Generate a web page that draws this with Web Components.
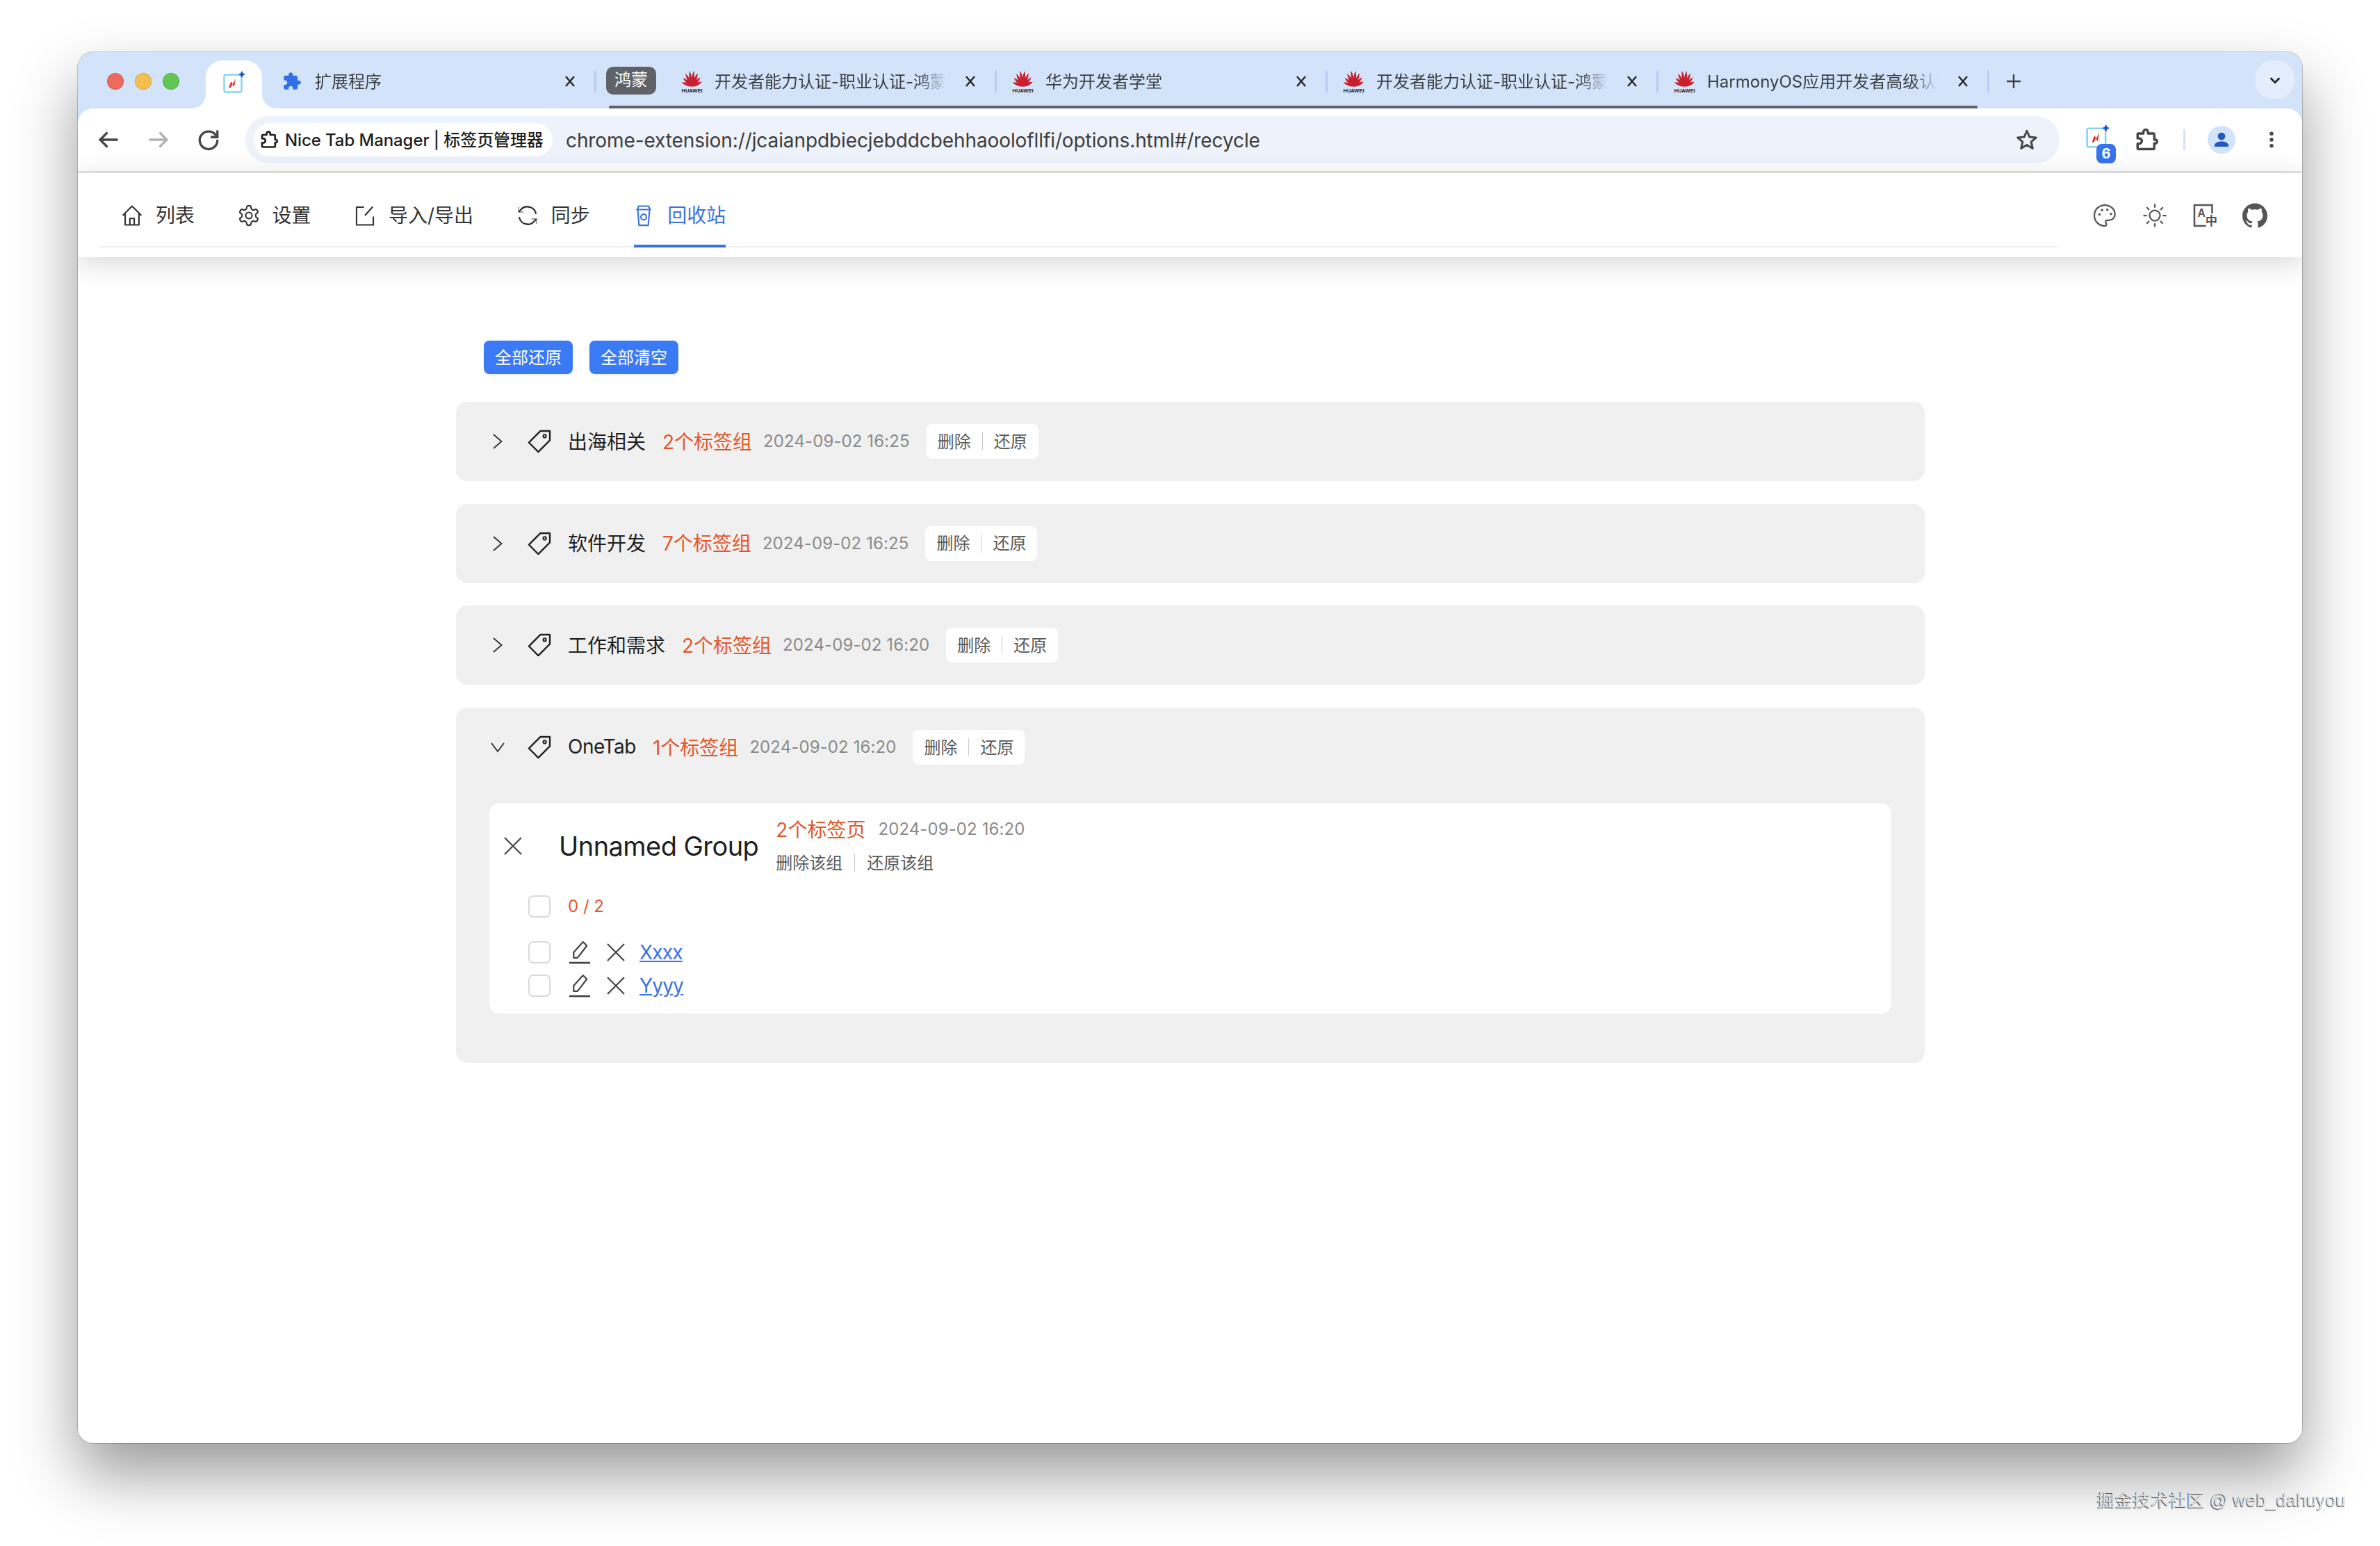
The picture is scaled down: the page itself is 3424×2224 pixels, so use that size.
<!DOCTYPE html>
<html lang="zh">
<head>
<meta charset="utf-8">
<title>Nice Tab Manager</title>
<style>
  html, body { margin: 0; background: #fff; }
  body { width: 3424px; height: 2224px; overflow: hidden; font-family: Inter, "Noto Sans CJK SC", sans-serif; }
</style>
</head>
<body>
<page-shell>
  <browser-window>
    <tab-strip slot="strip">
      <plain-tab first icon="puzzle">扩展程序</plain-tab>
      <tab-group label="鸿蒙">
        <plain-tab icon="huawei">开发者能力认证-职业认证-鸿蒙生态</plain-tab>
        <plain-tab icon="huawei">华为开发者学堂</plain-tab>
        <plain-tab icon="huawei">开发者能力认证-职业认证-鸿蒙生态</plain-tab>
        <plain-tab icon="huawei">HarmonyOS应用开发者高级认证</plain-tab>
      </tab-group>
    </tab-strip>
    <tool-bar slot="toolbar"></tool-bar>
    <nav-bar slot="nav"></nav-bar>
    <recycle-page>
      <recycle-card name="出海相关" count="2个标签组" date="2024-09-02 16:25"></recycle-card>
      <recycle-card name="软件开发" count="7个标签组" date="2024-09-02 16:25"></recycle-card>
      <recycle-card name="工作和需求" count="2个标签组" date="2024-09-02 16:20"></recycle-card>
      <recycle-card open name="OneTab" count="1个标签组" date="2024-09-02 16:20">
        <group-panel name="Unnamed Group" count="2个标签页" date="2024-09-02 16:20">
          <tab-link>Xxxx</tab-link>
          <tab-link>Yyyy</tab-link>
        </group-panel>
      </recycle-card>
    </recycle-page>
  </browser-window>
</page-shell>

<script>
const CJK = 'Inter, "Noto Sans CJK SC", sans-serif';

const ICONS = {
  back: '<path d="M21 12H4M11 5l-7 7 7 7" fill="none" stroke="currentColor" stroke-width="2.2"/>',
  forward: '<path d="M3 12h17M13 5l7 7-7 7" fill="none" stroke="currentColor" stroke-width="2.2"/>',
  reload: '<path d="M19.5 8.5A8.5 8.5 0 1 0 20.5 12" fill="none" stroke="currentColor" stroke-width="2.2"/><path d="M20.5 3v6.5H14" fill="none" stroke="currentColor" stroke-width="2.2"/>',
  puzzle: '<path fill="currentColor" d="M20.5 11H19V7c0-1.1-.9-2-2-2h-4V3.5C13 2.12 11.88 1 10.5 1S8 2.12 8 3.5V5H4c-1.1 0-1.99.9-1.99 2v3.8H3.5c1.49 0 2.7 1.21 2.7 2.7s-1.21 2.7-2.7 2.7H2V20c0 1.1.9 2 2 2h3.8v-1.5c0-1.49 1.21-2.7 2.7-2.7 1.49 0 2.7 1.21 2.7 2.7V22H17c1.1 0 2-.9 2-2v-4h1.5c1.38 0 2.5-1.12 2.5-2.5S21.88 11 20.5 11z"/>',
  puzzleLine: '<path fill="none" stroke="currentColor" stroke-width="2.3" stroke-linejoin="round" d="M19.5 12V7c0-.6-.4-1-1-1h-5V4.5a2.2 2.2 0 0 0-4.4 0V6H4.5c-.6 0-1 .4-1 1v3.6H5a2.6 2.6 0 0 1 0 5.2H3.5V20c0 .6.4 1 1 1h14c.6 0 1-.4 1-1v-4.500h1.300a1.800 1.800 0 0 0 0-3.500z"/>',
  star: '<path fill="none" stroke="currentColor" stroke-width="2.1" stroke-linejoin="round" d="M12 3l2.700 6.200 6.700.6-5.100 4.400 1.600 6.600L12 17.300 6.100 20.800l1.600-6.600-5.100-4.400 6.700-.6z"/>',
  person: '<circle cx="12" cy="8" r="4.300" fill="currentColor"/><path fill="currentColor" d="M4 20v-1.500c0-3 4-4.500 8-4.500s8 1.500 8 4.500V20z"/>',
  dots: '<circle cx="12" cy="5" r="2.200" fill="currentColor"/><circle cx="12" cy="12" r="2.200" fill="currentColor"/><circle cx="12" cy="19" r="2.200" fill="currentColor"/>',
  down: '<path d="M5 9l7 7 7-7" fill="none" stroke="currentColor" stroke-width="3"/>',
  plus: '<path d="M12 2v20M2 12h20" stroke="currentColor" stroke-width="2.400"/>',
  close: '<path d="M3 3l18 18M21 3L3 21" stroke="currentColor" stroke-width="1.600" fill="none"/>',
  tabClose: '<path d="M6 5l12 14M18 5L6 19" stroke="currentColor" stroke-width="2.600" fill="none"/>',
  home: '<path d="M2.500 12L12 2.500l9.500 9.500M5 10v11.500h14V10M9.800 21.500V15h4.400v6.500" fill="none" stroke="currentColor" stroke-width="1.500" stroke-linejoin="round"/>',
  gear: '<path fill="none" stroke="currentColor" stroke-width="1.500" d="M12.220 2h-.44a2 2 0 0 0-2 2v.18a2 2 0 0 1-1 1.730l-.43.25a2 2 0 0 1-2 0l-.15-.08a2 2 0 0 0-2.730.73l-.22.38a2 2 0 0 0 .73 2.730l.15.1a2 2 0 0 1 1 1.720v.51a2 2 0 0 1-1 1.740l-.15.09a2 2 0 0 0-.73 2.730l.22.38a2 2 0 0 0 2.730.73l.15-.08a2 2 0 0 1 2 0l.43.25a2 2 0 0 1 1 1.730V20a2 2 0 0 0 2 2h.44a2 2 0 0 0 2-2v-.18a2 2 0 0 1 1-1.730l.43-.25a2 2 0 0 1 2 0l.15.08a2 2 0 0 0 2.730-.73l.22-.39a2 2 0 0 0-.73-2.730l-.15-.08a2 2 0 0 1-1-1.740v-.5a2 2 0 0 1 1-1.740l.15-.09a2 2 0 0 0 .73-2.730l-.22-.38a2 2 0 0 0-2.730-.73l-.15.08a2 2 0 0 1-2 0l-.43-.25a2 2 0 0 1-1-1.730V4a2 2 0 0 0-2-2z"/><circle cx="12" cy="12" r="3.200" fill="none" stroke="currentColor" stroke-width="1.500"/>',
  share: '<path d="M11 3.500H3.500v18h17V13M12 12l8-9" fill="none" stroke="currentColor" stroke-width="1.500"/>',
  sync: '<path d="M20.500 10.500A8.800 8.800 0 0 0 5 6.300L3 8.500M3.500 13.500A8.800 8.800 0 0 0 19 17.700l2-2.200" fill="none" stroke="currentColor" stroke-width="1.600"/><path d="M3 3.500v5h5M21 20.500v-5h-5" fill="none" stroke="currentColor" stroke-width="1.200" opacity=".5"/>',
  bin: '<path d="M7 2.500h10l1.500 3.500h-13zM4.500 6h15M6 6l1.300 16h9.400L18 6" fill="none" stroke="currentColor" stroke-width="1.500" stroke-linejoin="round"/><circle cx="12" cy="13.500" r="2.800" fill="none" stroke="currentColor" stroke-width="1.500"/>',
  tag: '<path d="M13 2.500h8.500V11L11 21.500 2.500 13z" fill="none" stroke="currentColor" stroke-width="1.500" stroke-linejoin="round"/><circle cx="16.800" cy="7.200" r="1.300" fill="none" stroke="currentColor" stroke-width="1.300"/>',
  right: '<path d="M6 2l11.500 10L6 22" fill="none" stroke="currentColor" stroke-width="1.900"/>',
  open: '<path d="M3 6l9 12 9-12" fill="none" stroke="currentColor" stroke-width="1.900"/>',
  pen: '<path d="M6.500 17v-5L15 2.500l3.500 3.500L10 17z" fill="none" stroke="currentColor" stroke-width="1.400" stroke-linejoin="round"/><path d="M2.500 21.500h19" stroke="currentColor" stroke-width="1.700"/>',
  palette: '<path d="M12 2C6.500 2 2 6.500 2 12s4.500 10 10 10c.9 0 1.600-.7 1.600-1.600 0-.4-.2-.8-.4-1.100-.3-.3-.4-.7-.4-1.100 0-.9.7-1.600 1.600-1.600H16c3.100 0 5.800-2.500 5.800-5.600C21.800 6 17.500 2 12 2z" fill="none" stroke="currentColor" stroke-width="1.500"/><circle cx="7" cy="11" r="1.200" fill="currentColor"/><circle cx="9.500" cy="6.800" r="1.200" fill="currentColor"/><circle cx="14.500" cy="6.500" r="1.200" fill="currentColor"/><circle cx="18" cy="10.500" r="1.200" fill="currentColor"/>',
  sun: '<circle cx="12" cy="12" r="5" fill="none" stroke="currentColor" stroke-width="1.500"/><path d="M12 1v3.500M12 19.500V23M1 12h3.500M19.500 12H23M4.200 4.200l2.500 2.500M17.300 17.300l2.500 2.500M4.200 19.800l2.500-2.500M17.300 6.700l2.500-2.500" stroke="currentColor" stroke-width="1.500"/>',
  lang: '<path d="M19 10V2H2v20h11" fill="none" stroke="currentColor" stroke-width="1.700"/><text x="5" y="13" font-size="10.500" font-weight="700" font-family="Liberation Sans, sans-serif" fill="currentColor">A</text><text x="12.500" y="21" font-size="11.500" font-weight="700" font-family="Noto Sans CJK SC, sans-serif" fill="currentColor">中</text>',
  github: '<path fill="currentColor" d="M12 .297c-6.630 0-12 5.373-12 12 0 5.303 3.438 9.800 8.205 11.385.6.113.82-.258.82-.577 0-.285-.01-1.040-.015-2.040-3.338.724-4.042-1.610-4.042-1.610C4.422 18.070 3.633 17.700 3.633 17.700c-1.087-.744.084-.729.084-.729 1.205.084 1.838 1.236 1.838 1.236 1.070 1.835 2.809 1.305 3.495.998.108-.776.417-1.305.76-1.605-2.665-.3-5.466-1.332-5.466-5.930 0-1.310.465-2.380 1.235-3.220-.135-.303-.54-1.523.105-3.176 0 0 1.005-.322 3.300 1.230.96-.267 1.980-.399 3-.405 1.020.006 2.040.138 3 .405 2.280-1.552 3.285-1.230 3.285-1.230.645 1.653.24 2.873.12 3.176.765.84 1.230 1.910 1.230 3.220 0 4.610-2.805 5.625-5.475 5.920.42.36.81 1.096.81 2.220 0 1.606-.015 2.896-.015 3.286 0 .315.21.69.825.57C20.565 22.092 24 17.592 24 12.297c0-6.627-5.373-12-12-12"/>',
  nice: '<rect x="1.500" y="5.500" width="25" height="25" rx="2.500" fill="#fff" stroke="#86d2f5" stroke-width="2.400"/><path d="M8 24l3.500-9 2.500 4 4-8-2 12-3-4-2 5z" fill="#d9331f"/><path d="M27 0l1.800 3.200L32 5l-3.200 1.800L27 10l-1.800-3.200L22 5l3.200-1.800z" fill="#2456d6"/>'
};

class UiIcon extends HTMLElement {
  constructor() {
    super();
    this.attachShadow({ mode: 'open' });
    const size = this.getAttribute('size') || 32;
    const name = this.getAttribute('name');
    const box = name === 'nice' ? '0 0 32 32' : '0 0 24 24';
    this.shadowRoot.innerHTML = `
      <style>
        :host { display: inline-flex; width: ${size}px; height: ${size}px; flex: none; align-items: center; justify-content: center; }
        svg { width: 100%; height: 100%; display: block; overflow: visible; }
      </style>
      <svg viewBox="${box}">${ICONS[name] || ''}</svg>`;
  }
}
customElements.define('ui-icon', UiIcon);

class HuaweiLogo extends HTMLElement {
  constructor() {
    super();
    this.attachShadow({ mode: 'open' });
    const petals = [[-66, 16], [-44, 18], [-25, 21], [-8, 23], [8, 23], [25, 21], [44, 18], [66, 16]]
      .map(([a, l]) => `<path transform="translate(15.500 23.500) rotate(${a}) scale(1 ${l / 22})" d="M0 0C-2.800-7-2.600-15 -.6-22 2.200-15 2.800-7 0 0z" fill="#c9202e"/>`)
      .join('');
    this.shadowRoot.innerHTML = `
      <style>
        :host { display: block; width: 31px; height: 32px; flex: none; }
        svg { width: 31px; height: 32px; display: block; }
      </style>
      <svg viewBox="0 0 31 32">${petals}<text x="15.500" y="31.500" text-anchor="middle" font-size="7.500" font-weight="700" font-family="Liberation Sans, sans-serif" fill="#222">HUAWEI</text></svg>`;
  }
}
customElements.define('huawei-logo', HuaweiLogo);

class PageShell extends HTMLElement {
  constructor() {
    super();
    this.attachShadow({ mode: 'open' });
    this.shadowRoot.innerHTML = `
      <style>
        :host { display: block; position: relative; width: 3424px; height: 2224px; box-sizing: border-box; padding: 75px 112px 0; }
        .mark {
          position: absolute; left: 3017px; top: 2137px; white-space: nowrap;
          font: 25.500px "Liberation Sans", "Noto Sans CJK SC", sans-serif; letter-spacing: .3px;
          color: #e2e2e2; text-shadow: -1px 1px 1px #444;
        }
      </style>
      <slot></slot>
      <div class="mark">掘金技术社区 @ web_dahuyou</div>`;
  }
}
customElements.define('page-shell', PageShell);

class BrowserWindow extends HTMLElement {
  constructor() {
    super();
    this.attachShadow({ mode: 'open' });
    this.shadowRoot.innerHTML = `
      <style>
        :host {
          display: flex; flex-direction: column; width: 3200px; height: 2001px;
          border-radius: 22px; overflow: hidden; background: #d3e3fa;
          box-shadow: 0 45px 90px rgba(0,0,0,.4), 0 0 0 1px rgba(0,0,0,.18);
          font-family: ${CJK};
        }
        .page { flex: 1; display: flex; flex-direction: column; background: #fff; }
      </style>
      <slot name="strip"></slot>
      <slot name="toolbar"></slot>
      <div class="page">
        <slot name="nav"></slot>
        <slot></slot>
      </div>`;
  }
}
customElements.define('browser-window', BrowserWindow);

class TabStrip extends HTMLElement {
  constructor() {
    super();
    this.attachShadow({ mode: 'open' });
    this.shadowRoot.innerHTML = `
      <style>
        :host { display: flex; height: 81px; box-sizing: border-box; padding: 12px 12px 0 42px; color: #3c4043; }
        .lights { display: flex; gap: 16px; height: 60px; align-items: center; margin-right: 38px; }
        .lights i { width: 24px; height: 24px; border-radius: 50%; box-sizing: border-box; border: 1px solid rgba(0,0,0,.12); }
        .active {
          position: relative; width: 81px; height: 69px; background: #fff; border-radius: 24px 24px 0 0;
          display: flex; justify-content: center; padding-top: 15px; box-sizing: border-box;
        }
        .active::before, .active::after { content: ""; position: absolute; bottom: 0; width: 20px; height: 20px; }
        .active::before { left: -20px; background: radial-gradient(circle at 0 0, transparent 19.500px, #fff 20px); }
        .active::after { right: -20px; background: radial-gradient(circle at 100% 0, transparent 19.500px, #fff 20px); }
        .plus { display: flex; height: 60px; align-items: center; margin-left: 40px; color: #3c4043; }
        .more {
          margin-left: auto; width: 55px; height: 55px; border-radius: 24px; background: #e4edfb;
          display: flex; align-items: center; justify-content: center; color: #1f1f1f;
        }
      </style>
      <div class="lights">
        <i style="background:#ed6a5e"></i><i style="background:#f5bf4f"></i><i style="background:#62c554"></i>
      </div>
      <div class="active"><ui-icon name="nice" size="32"></ui-icon></div>
      <slot></slot>
      <div class="plus"><ui-icon name="plus" size="24"></ui-icon></div>
      <div class="more"><ui-icon name="down" size="22"></ui-icon></div>`;
  }
}
customElements.define('tab-strip', TabStrip);

class TabGroup extends HTMLElement {
  constructor() {
    super();
    this.attachShadow({ mode: 'open' });
    this.shadowRoot.innerHTML = `
      <style>
        :host {
          display: flex; height: 69px; box-sizing: border-box; margin-left: 18px; margin-right: -17px;
          align-items: flex-start; position: relative;
        }
        :host::after { content: ""; position: absolute; left: 0; right: 17px; bottom: 0; height: 4px; background: #5f6368; border-radius: 2px 2px 0 0; }
        .chip {
          margin: 9px 14px 0 -4px; width: 72px; height: 40px; box-sizing: border-box; padding-bottom: 3px; border-radius: 10px; background: #5f6368; color: #fff;
          font-size: 24px; line-height: 37px; text-align: center; font-family: ${CJK};
        }
      </style>
      <div class="chip">${this.getAttribute('label')}</div>
      <slot></slot>`;
  }
}
customElements.define('tab-group', TabGroup);

class PlainTab extends HTMLElement {
  constructor() {
    super();
    this.attachShadow({ mode: 'open' });
    const first = this.hasAttribute('first');
    const icon = this.getAttribute('icon') === 'huawei'
      ? '<huawei-logo></huawei-logo>'
      : '<ui-icon name="puzzle" size="28" style="color:#3070e4"></ui-icon>';
    this.shadowRoot.innerHTML = `
      <style>
        :host {
          display: flex; align-items: center; height: 60px; box-sizing: border-box; flex: none;
          width: ${first ? 481 : 476}px; padding: 0 0 0 ${first ? 29 : 22}px; font-size: 24px; color: #3c4043;
          font-family: ${CJK};
        }
        .name {
          flex: 1; min-width: 0; margin-left: ${first ? 19 : 17}px; padding-bottom: 4px; white-space: nowrap; overflow: hidden;
          -webkit-mask-image: linear-gradient(to right, #000 calc(100% - 40px), transparent);
                  mask-image: linear-gradient(to right, #000 calc(100% - 40px), transparent);
        }
        .x { margin: 0 26px 0 23px; color: #2b2b2b; }
        .sep { width: 3px; height: 32px; background: #b7cdf5; border-radius: 2px; margin-left: -3px; }
      </style>
      ${icon}
      <div class="name"><slot></slot></div>
      <ui-icon class="x" name="tabClose" size="24"></ui-icon>
      <div class="sep"></div>`;
  }
}
customElements.define('plain-tab', PlainTab);

class ToolBar extends HTMLElement {
  constructor() {
    super();
    this.attachShadow({ mode: 'open' });
    this.shadowRoot.innerHTML = `
      <style>
        :host {
          display: flex; align-items: center; height: 93px; box-sizing: border-box; background: #fff;
          border-radius: 22px 22px 0 0; border-bottom: 3px solid #e4e4e4; padding: 0 0 1px 26px; color: #474747;
          font-family: ${CJK};
        }
        .nav { display: flex; gap: 36px; margin-right: 35px; }
        .omni {
          width: 2610px; height: 68px; box-sizing: border-box; border-radius: 34px; background: #eef2fa; flex: none;
          display: flex; align-items: center; padding: 0 30px 0 12px;
        }
        .chip {
          display: flex; align-items: center; height: 48px; width: 430px; box-sizing: border-box; flex: none;
          padding-left: 8px; background: #fff; border-radius: 24px; font-size: 24px; font-weight: 500; letter-spacing: -.1px; color: #1f1f1f; white-space: nowrap;
        }
        .chip span { padding-bottom: 3px; }
        .chip ui-icon { margin-right: 9px; }
        .url { flex: 1; margin-left: 19px; padding-top: 2px; font: 28px Inter, sans-serif; letter-spacing: -.1px; color: #3c3c3c; white-space: nowrap; }
        .ext { position: relative; width: 43px; height: 43px; margin-left: 38px; flex: none; margin-bottom: 0; align-self: center; }
        .badge {
          position: absolute; right: 0; bottom: -13px; width: 28px; height: 28px; border-radius: 8px; background: #3574ec;
          color: #fff; font: 700 20px/28px Inter, sans-serif; text-align: center;
        }
        .bar { width: 3px; height: 30px; background: #d3e3fa; margin: 0 32px 0 35px; }
        .avatar {
          width: 40px; height: 40px; border-radius: 50%; background: #d3e3fa; color: #1f57c3;
          display: flex; align-items: center; justify-content: center;
        }
      </style>
      <div class="nav">
        <ui-icon name="back" size="36"></ui-icon>
        <ui-icon name="forward" size="36" style="color:#b2b2b2"></ui-icon>
        <ui-icon name="reload" size="36"></ui-icon>
      </div>
      <div class="omni">
        <div class="chip"><ui-icon name="puzzleLine" size="28" style="color:#1f1f1f"></ui-icon><span>Nice Tab Manager | 标签页管理器</span></div>
        <div class="url">chrome-extension://jcaianpdbiecjebddcbehhaoolofllfi/options.html#/recycle</div>
        <ui-icon name="star" size="34"></ui-icon>
      </div>
      <div class="ext"><ui-icon name="nice" size="34"></ui-icon><div class="badge">6</div></div>
      <ui-icon name="puzzleLine" size="36" style="margin-left:26px"></ui-icon>
      <div class="bar"></div>
      <div class="avatar"><ui-icon name="person" size="30"></ui-icon></div>
      <ui-icon name="dots" size="30" style="margin-left:37px"></ui-icon>`;
  }
}
customElements.define('tool-bar', ToolBar);

class NavBar extends HTMLElement {
  constructor() {
    super();
    this.attachShadow({ mode: 'open' });
    const items = [['home', '列表'], ['gear', '设置'], ['share', '导入/导出'], ['sync', '同步'], ['bin', '回收站']];
    const links = items.map(([icon, label], i) => `
      <div class="item${i === 4 ? ' on' : ''}"><ui-icon name="${icon}" size="34"></ui-icon><span>${label}</span></div>`).join('');
    this.shadowRoot.innerHTML = `
      <style>
        :host {
          display: flex; height: 121px; box-sizing: border-box; padding-left: 31px; background: #fff; color: #333;
          box-shadow: 0 8px 40px rgba(0,0,0,.16); position: relative; font-family: ${CJK};
        }
        .menu {
          width: 2817px; height: 107px; box-sizing: border-box; padding: 15px 0 0 33px; flex: none;
          display: flex; gap: 63.500px; border-bottom: 2px solid #efefef;
        }
        .item {
          display: flex; align-items: center; gap: 20px; font-size: 28px; box-sizing: border-box;
          border-top: 4px solid transparent; border-bottom: 4px solid transparent; margin-bottom: -2px; white-space: nowrap;
        }
        .item ui-icon { margin: 0 -3px; }
        .item span { padding-bottom: 4px; }
        .item.on { color: #3b72e0; border-bottom-color: #3b72e0; }
        .tools { display: flex; align-items: center; gap: 36px; margin-left: 50px; color: #555; }
      </style>
      <div class="menu">${links}</div>
      <div class="tools">
        <ui-icon name="palette" size="36"></ui-icon><ui-icon name="sun" size="36"></ui-icon><ui-icon name="lang" size="36"></ui-icon><ui-icon name="github" size="36"></ui-icon>
      </div>`;
  }
}
customElements.define('nav-bar', NavBar);

class RecyclePage extends HTMLElement {
  constructor() {
    super();
    this.attachShadow({ mode: 'open' });
    this.shadowRoot.innerHTML = `
      <style>
        :host { display: block; padding: 120px 543px 0 544px; font-family: ${CJK}; }
        .top { display: flex; gap: 24px; margin: 0 0 40px 40px; }
        button {
          width: 128px; height: 48px; border: 0; padding: 0 0 4px; border-radius: 8px; background: #3a7af5; color: #fff;
          font: 24px ${CJK}; box-shadow: 0 3px 0 rgba(58,122,245,.08);
        }
        .list { display: flex; flex-direction: column; gap: 32.700px; }
      </style>
      <div class="top"><button>全部还原</button><button>全部清空</button></div>
      <div class="list"><slot></slot></div>`;
  }
}
customElements.define('recycle-page', RecyclePage);

class OpButtons extends HTMLElement {
  constructor() {
    super();
    this.attachShadow({ mode: 'open' });
    this.shadowRoot.innerHTML = `
      <style>
        :host {
          display: flex; align-items: center; height: 50px; box-sizing: border-box; padding: 0 16px; gap: 16px;
          background: #fff; border-radius: 8px; font-size: 24px; color: #595959; flex: none;
        }
        span { padding-bottom: 4px; }
        i { width: 1px; height: 26px; background: #c8c8c8; }
      </style>
      <span>删除</span><i></i><span>还原</span>`;
  }
}
customElements.define('op-buttons', OpButtons);

class RecycleCard extends HTMLElement {
  constructor() {
    super();
    this.attachShadow({ mode: 'open' });
    const open = this.hasAttribute('open');
    this.shadowRoot.innerHTML = `
      <style>
        :host {
          display: block; box-sizing: border-box; background: #f0f0f0; border-radius: 16px;
          padding: 32px 48px ${open ? 71 : 32}px; font-family: ${CJK};
        }
        .head { display: flex; align-items: center; height: 50px; white-space: nowrap; }
        .arrow { color: #333; }
        .tag { margin: 0 22px 0 29px; color: #222; }
        .name { font-size: 28px; color: #1f1f1f; margin-right: 24px; letter-spacing: ${open ? '-.5px' : '0'}; padding-bottom: 3px; }
        .count { font-size: 28px; color: #e2572b; margin-right: 16px; padding-bottom: 3px; }
        .date { font-size: 24px; color: #8a8a8a; margin-right: 24px; letter-spacing: .1px; padding-bottom: 1px; }
        .body { margin-top: ${open ? 56 : 0}px; }
      </style>
      <div class="head">
        <ui-icon class="arrow" name="${open ? 'open' : 'right'}" size="24"></ui-icon>
        <ui-icon class="tag" name="tag" size="38"></ui-icon>
        <span class="name">${this.getAttribute('name')}</span>
        <span class="count">${this.getAttribute('count')}</span>
        <span class="date">${this.getAttribute('date')}</span>
        <op-buttons></op-buttons>
      </div>
      <div class="body"><slot></slot></div>`;
  }
}
customElements.define('recycle-card', RecycleCard);

class CheckBox extends HTMLElement {
  constructor() {
    super();
    this.attachShadow({ mode: 'open' });
    this.shadowRoot.innerHTML = `
      <style>
        :host { display: block; width: 32px; height: 32px; box-sizing: border-box; border: 2px solid #d9d9d9; border-radius: 7px; background: #fff; flex: none; }
      </style>`;
  }
}
customElements.define('check-box', CheckBox);

class GroupPanel extends HTMLElement {
  constructor() {
    super();
    this.attachShadow({ mode: 'open' });
    this.shadowRoot.innerHTML = `
      <style>
        :host { display: block; height: 302px; box-sizing: border-box; background: #fff; border-radius: 14px; padding: 20px 18px 0; font-family: ${CJK}; }
        .head { display: flex; align-items: center; height: 82px; white-space: nowrap; }
        .x { color: #444; margin-right: 50px; }
        .title { font-size: 38px; letter-spacing: -.55px; color: #1f1f1f; margin-right: 25px; }
        .meta { display: flex; flex-direction: column; gap: 14px; }
        .meta div { display: flex; align-items: center; height: 34px; }
        .count { font-size: 28px; color: #e2572b; margin-right: 18px; padding-bottom: 3px; }
        .date { font-size: 24px; color: #8a8a8a; letter-spacing: .1px; padding-bottom: 1px; }
        .ops { font-size: 24px; color: #595959; gap: 17px; }
        .ops span { padding-bottom: 4px; }
        .ops i { width: 1px; height: 26px; background: #c8c8c8; }
        .all { display: flex; align-items: center; gap: 25px; margin: 30px 0 34px 38px; font-size: 24px; color: #e2572b; }
        .all span { padding-bottom: 2px; }
        .rows { display: flex; flex-direction: column; gap: 16px; margin-left: 38px; }
      </style>
      <div class="head">
        <ui-icon class="x" name="close" size="32"></ui-icon>
        <span class="title">${this.getAttribute('name')}</span>
        <div class="meta">
          <div><span class="count">${this.getAttribute('count')}</span><span class="date">${this.getAttribute('date')}</span></div>
          <div class="ops"><span>删除该组</span><i></i><span>还原该组</span></div>
        </div>
      </div>
      <div class="all"><check-box></check-box><span>0 / 2</span></div>
      <div class="rows"><slot></slot></div>`;
  }
}
customElements.define('group-panel', GroupPanel);

class TabLink extends HTMLElement {
  constructor() {
    super();
    this.attachShadow({ mode: 'open' });
    this.shadowRoot.innerHTML = `
      <style>
        :host { display: flex; align-items: center; height: 32px; color: #444; font-family: ${CJK}; }
        .pen { margin: 0 17px 0 23px; }
        a { margin-left: 18px; font-size: 28px; letter-spacing: -.8px; color: #3b72e0; text-decoration: underline; }
      </style>
      <check-box></check-box>
      <ui-icon class="pen" name="pen" size="38"></ui-icon>
      <ui-icon name="close" size="32"></ui-icon>
      <a href="#"><slot></slot></a>`;
  }
}
customElements.define('tab-link', TabLink);
</script>
</body>
</html>
